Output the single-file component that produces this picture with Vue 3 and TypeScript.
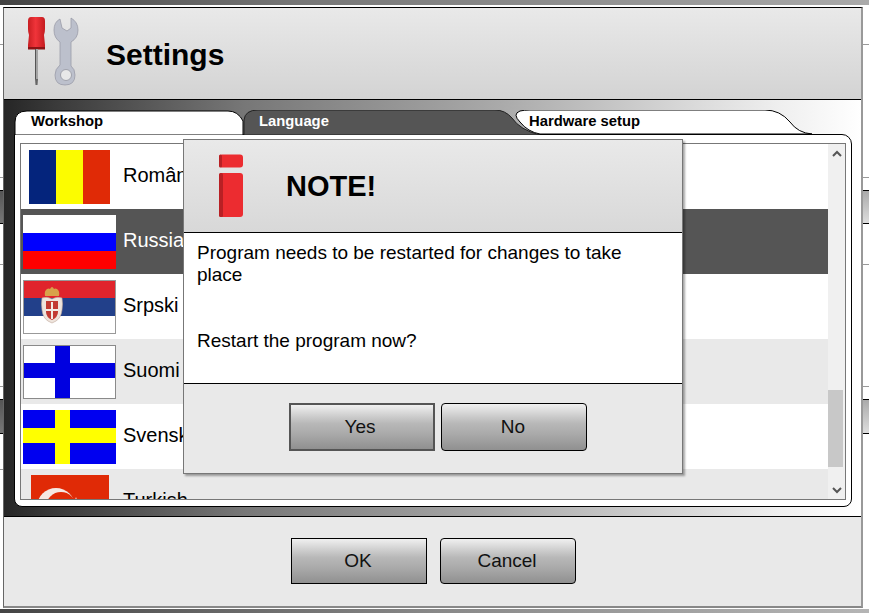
<template>
  <div class="screen">
    <div class="strip strip-top"></div>

    <div class="middle">
      <div class="edge edge-left">
        <div v-for="(seg, i) in edgeLeft" :key="i" :class="seg.kind" :style="{ height: seg.h + 'px' }"></div>
      </div>

      <section class="window">
        <header class="win-header">
          <svg class="tools-icon" width="60" height="72" viewBox="24 15 60 72">
            <defs>
              <linearGradient id="handle" x1="0" x2="1" y1="0" y2="0">
                <stop offset="0" stop-color="#c81e22" />
                <stop offset="0.45" stop-color="#f0343a" />
                <stop offset="1" stop-color="#c41c20" />
              </linearGradient>
            </defs>
            <path d="M31 17h11q3 0 3 4v8q0 3-1 6l1 10v3H28v-3l1-10q-1-3-1-6v-8q0-4 3-4z" fill="url(#handle)" />
            <rect x="28" y="47" width="17" height="2.5" fill="#8c1416" />
            <rect x="35" y="49" width="3" height="31" fill="#a4a4a4" />
            <rect x="35" y="49" width="1" height="31" fill="#555" />
            <path d="M35 79h3l-.5 6h-2z" fill="#666" />
            <path d="M60 19q-6 3-6 11t6 12v23q-5 4-5 10 0 10 10 10t10-10q0-6-4-9V42q7-4 7-12t-7-12v10l-4 3-5-3z" fill="#bcc0cc" stroke="#9a9ca8" stroke-width=".8" />
            <circle cx="66" cy="75" r="5.5" fill="#e8e8e8" stroke="#a0a2ac" />
          </svg>
          <h1>Settings</h1>
        </header>

        <div class="band">
          <div class="tabs">
            <svg class="tab-shapes" width="838" height="25" viewBox="14 110 838 25">
              <path d="M15 135V122Q15 111 27 111H228Q238 111 243 121V135Z" fill="#fff" stroke="#000" />
              <path d="M244 135V120Q245 110 258 110H495Q505 110 512 118Q520 130 540 135Z" fill="#555" stroke="#222" />
              <path d="M540 134Q528 132 520 122Q512 114 520 111Q524 110 530 110H765Q780 110 790 122Q798 133 812 134Z" fill="#fff" stroke="#000" />
            </svg>
            <span v-for="tab in tabs" :key="tab.label" class="tab" :class="{ active: tab.active }">{{ tab.label }}</span>
          </div>

          <div class="panel">
            <div class="list">
              <div class="rows">
                <div
                  v-for="(lang, i) in languages"
                  :key="lang.name"
                  class="row"
                  :class="{ selected: lang.selected, odd: i % 2 === 1 }"
                >
                  <div class="flag-box">
                    <svg :width="lang.w" height="54" :viewBox="`0 0 ${lang.w} 54`" class="flag">
                      <rect
                        v-for="(r, j) in lang.rects"
                        :key="j"
                        :x="r[0]"
                        :y="r[1]"
                        :width="r[2]"
                        :height="r[3]"
                        :fill="r[4]"
                      />
                      <g v-if="lang.name === 'Srpski'">
                        <rect x=".5" y=".5" width="92" height="53" fill="none" stroke="#999" />
                        <path d="M22 16q-1-5 2-7 2-1 3 0 1-2 2-2t2 2q1-1 3 0 3 2 2 7z" fill="#d8a24a" />
                        <path d="M19 18q5-2 10 1 5-3 10-1 1 6 0 12-1 8-6 11l-4 2-4-2q-5-3-6-11-1-6 0-12z" fill="#eee4dc" stroke="#c0a89a" stroke-width=".6" />
                        <path d="M23 21h12v11q0 5-6 8-6-3-6-8z" fill="#c23a32" />
                        <path d="M28 22h2v7h5v2h-5v8h-2v-8h-5v-2h5z" fill="#f2ece6" />
                      </g>
                      <g v-if="lang.name === 'Suomi'">
                        <rect x=".5" y=".5" width="92" height="53" fill="none" stroke="#8a8a8a" />
                      </g>
                      <g v-if="lang.name === 'Turkish'">
                        <circle cx="25" cy="32" r="19" fill="#f5e8e4" />
                        <circle cx="30" cy="32" r="15" fill="#e02a06" />
                        <path d="M45 22l2 6 6-1-4 5 3 5-6-2-4 4v-6l-5-3 6-2z" fill="#f5e8e4" />
                      </g>
                    </svg>
                  </div>
                  <span class="lang-name">{{ lang.name }}</span>
                </div>
              </div>

              <div class="scrollbar">
                <div class="arrow">
                  <svg width="10" height="7" viewBox="0 0 10 7"><path d="M1 6l4-4 4 4" fill="none" stroke="#555" stroke-width="2" /></svg>
                </div>
                <div class="track"><div class="thumb"></div></div>
                <div class="arrow">
                  <svg width="10" height="7" viewBox="0 0 10 7"><path d="M1 1l4 4 4-4" fill="none" stroke="#555" stroke-width="2" /></svg>
                </div>
              </div>
            </div>
          </div>
        </div>

        <footer class="win-footer">
          <button class="btn wide" type="button">OK</button>
          <button class="btn wide round" type="button">Cancel</button>
        </footer>
      </section>

      <div class="edge edge-right">
        <div v-for="(seg, i) in edgeRight" :key="i" :class="seg.kind" :style="{ height: seg.h + 'px' }"></div>
      </div>
    </div>

    <div class="strip strip-bottom"></div>

    <div class="dialog">
      <header class="dlg-header">
        <svg class="info-icon" width="27" height="65" viewBox="0 0 27 65">
          <rect x="1" y="0.5" width="24" height="13" rx="3" fill="#ec2c30" />
          <rect x="1" y="0.5" width="3" height="13" rx="1.5" fill="#b82024" />
          <rect x="1" y="19" width="24" height="44" rx="3" fill="#ec2c30" />
          <rect x="1" y="19" width="4" height="44" rx="1.5" fill="#b82024" />
        </svg>
        <h2>NOTE!</h2>
      </header>
      <div class="dlg-body">
        <p>Program needs to be restarted for changes to take place</p>
        <p>Restart the program now?</p>
      </div>
      <footer class="dlg-footer">
        <button class="btn default" type="button">Yes</button>
        <button class="btn round" type="button">No</button>
      </footer>
    </div>
  </div>
</template>

<script setup lang="ts">
interface Segment {
  h: number
  kind: 'gap' | 'line' | 'block'
}

type FlagRect = [number, number, number, number, string]

interface Language {
  name: string
  w: number
  rects: FlagRect[]
  selected?: boolean
}

const tabs = [{ label: 'Workshop' }, { label: 'Language', active: true }, { label: 'Hardware setup' }]

const edgeRight: Segment[] = [
  { h: 37, kind: 'gap' },
  { h: 1, kind: 'line' },
  { h: 132, kind: 'gap' },
  { h: 1, kind: 'line' },
  { h: 12, kind: 'gap' },
  { h: 34, kind: 'block' },
  { h: 40, kind: 'gap' },
  { h: 1, kind: 'line' },
  { h: 121, kind: 'gap' },
  { h: 1, kind: 'line' },
  { h: 12, kind: 'gap' },
  { h: 35, kind: 'block' }
]

const edgeLeft: Segment[] = [...edgeRight, { h: 35, kind: 'gap' }, { h: 1, kind: 'line' }]

const languages: Language[] = [
  {
    name: 'Română',
    w: 81,
    rects: [
      [0, 0, 27, 54, '#04247c'],
      [27, 0, 27, 54, '#fcfc00'],
      [54, 0, 27, 54, '#e02a06']
    ]
  },
  {
    name: 'Russian',
    w: 93,
    selected: true,
    rects: [
      [0, 0, 93, 18, '#ffffff'],
      [0, 18, 93, 18, '#0000ff'],
      [0, 36, 93, 18, '#ff0000']
    ]
  },
  {
    name: 'Srpski',
    w: 93,
    rects: [
      [0, 0, 93, 18, '#e0242c'],
      [0, 18, 93, 18, '#22408a'],
      [0, 36, 93, 18, '#ffffff']
    ]
  },
  {
    name: 'Suomi',
    w: 93,
    rects: [
      [0, 0, 93, 54, '#ffffff'],
      [32, 0, 15, 54, '#0000e0'],
      [0, 18, 93, 15, '#0000e0']
    ]
  },
  {
    name: 'Svenska',
    w: 93,
    rects: [
      [0, 0, 93, 54, '#0000f0'],
      [32, 0, 15, 54, '#ffff00'],
      [0, 18, 93, 15, '#ffff00']
    ]
  },
  {
    name: 'Turkish',
    w: 78,
    rects: [[0, 0, 78, 54, '#e02a06']]
  }
]
</script>

<style scoped>
.screen {
  position: relative;
  display: flex;
  flex-direction: column;
  width: 869px;
  height: 613px;
  overflow: hidden;
  background: #fff;
  font-family: 'Liberation Sans', Arial, sans-serif;
  color: #000;
}

.strip {
  flex: none;
}

.strip-top {
  height: 5px;
  margin-bottom: 2px;
  background: linear-gradient(90deg, #444 0%, #777 35%, #aaa 100%);
}

.strip-bottom {
  height: 4px;
  margin-top: 1px;
  background: linear-gradient(90deg, #444 0%, #888 50%, #b5b5b5 100%);
}

.middle {
  flex: 1;
  display: flex;
  min-height: 0;
}

.edge {
  flex: none;
  display: flex;
  flex-direction: column;
}

.edge-left {
  width: 3px;
}

.edge-right {
  width: 6px;
}

.line {
  background: #999;
}

.block {
  box-sizing: border-box;
  border-top: 1px solid #000;
  border-bottom: 1px solid #000;
}

.edge-left .block {
  background: linear-gradient(#555, #777);
}

.edge-right .block {
  background: linear-gradient(#aaa, #ddd);
}

.window {
  flex: 1;
  display: flex;
  flex-direction: column;
  min-width: 0;
  box-sizing: border-box;
  border-top: 1px solid #000;
  border-left: 1px solid #666;
  border-right: 2px solid #999;
  border-bottom: 2px solid #888;
  background: #e8e8e8;
}

.win-header {
  flex: none;
  display: flex;
  align-items: center;
  box-sizing: border-box;
  height: 92px;
  padding-left: 20px;
  border-bottom: 1px solid #000;
  background: linear-gradient(#e9e9e9, #d3d3d3);
}

.tools-icon {
  flex: none;
  align-self: flex-start;
  margin-top: 7px;
}

.win-header h1 {
  margin: 2px 0 0 22px;
  font-size: 30px;
  font-weight: 700;
}

.band {
  flex: none;
  box-sizing: border-box;
  height: 417px;
  padding: 10px 9px 9px 10px;
  border-bottom: 1px solid #000;
  background: linear-gradient(90deg, #262626 0%, #3a3a3a 6%, #777 28%, #aaa 58%, #eee 90%, #fff 100%);
}

.tabs {
  position: relative;
  display: grid;
  grid-template-columns: 228px 270px 1fr;
  height: 24px;
  padding-left: 17px;
}

.tab-shapes {
  position: absolute;
  top: 0;
  left: 0;
}

.tab {
  position: relative;
  font-size: 14.8px;
  font-weight: 700;
  line-height: 22px;
}

.tab.active {
  color: #fff;
}

.panel {
  box-sizing: border-box;
  height: 373px;
  padding: 8px 5px 6px;
  border: 1px solid #000;
  border-radius: 0 10px 8px 8px;
  background: #fff;
}

.list {
  display: flex;
  box-sizing: border-box;
  height: 100%;
  border: 1px solid #777;
  background: #fff;
}

.rows {
  flex: 1;
  min-width: 0;
  overflow: hidden;
}

.row {
  display: flex;
  align-items: center;
  height: 65px;
  background: #fff;
}

.row.odd {
  background: #e9e9e9;
}

.row.selected {
  background: #555;
  color: #fff;
}

.flag-box {
  flex: none;
  display: flex;
  justify-content: center;
  width: 97px;
}

.flag {
  flex: none;
  display: block;
}

.lang-name {
  margin-left: 5px;
  padding-bottom: 2px;
  font-size: 20px;
}

.scrollbar {
  flex: none;
  display: flex;
  flex-direction: column;
  width: 17px;
  background: #f0f0f0;
}

.arrow {
  flex: none;
  display: flex;
  align-items: center;
  justify-content: center;
  height: 18px;
}

.track {
  flex: 1;
}

.thumb {
  width: 15px;
  height: 77px;
  margin-top: 228px;
  background: #c8c8c8;
}

.win-footer {
  flex: 1;
  display: flex;
  gap: 13px;
  box-sizing: border-box;
  padding: 21px 0 0 287px;
  background: #e9e9e9;
}

.btn {
  flex: none;
  box-sizing: border-box;
  width: 146px;
  height: 48px;
  padding: 0 2px 0 0;
  border: 1px solid #000;
  background: linear-gradient(#f0f0f0 0%, #cacaca 28%, #b8b8b8 42%, #aaaaaa 65%, #909090 100%);
  color: #111;
  font-family: inherit;
  font-size: 19px;
}

.btn.wide {
  width: 136px;
  height: 46px;
}

.btn.round {
  border-radius: 4px;
}

.btn.default {
  padding-right: 4px;
  border: 2px solid #555;
}

.dialog {
  position: absolute;
  top: 139px;
  left: 183px;
  display: flex;
  flex-direction: column;
  box-sizing: border-box;
  width: 500px;
  height: 335px;
  border: 1px solid #777;
  background: #e9e9e9;
  box-shadow: 2px 2px 2px rgba(0, 0, 0, 0.35);
}

.dlg-header {
  flex: none;
  display: flex;
  align-items: center;
  box-sizing: border-box;
  height: 93px;
  padding-left: 34px;
  border-bottom: 1px solid #000;
  background: linear-gradient(#e9e9e9, #d8d8d8);
}

.info-icon {
  flex: none;
}

.dlg-header h2 {
  margin: 0 0 0 41px;
  font-size: 29px;
  font-weight: 700;
}

.dlg-body {
  flex: none;
  box-sizing: border-box;
  height: 151px;
  padding: 9px 50px 0 13px;
  border-bottom: 1px solid #000;
  background: #fff;
  font-size: 19px;
  line-height: 22px;
}

.dlg-body p {
  margin: 0 0 44px;
}

.dlg-footer {
  flex: 1;
  display: flex;
  gap: 6px;
  padding: 19px 0 0 105px;
}
</style>
